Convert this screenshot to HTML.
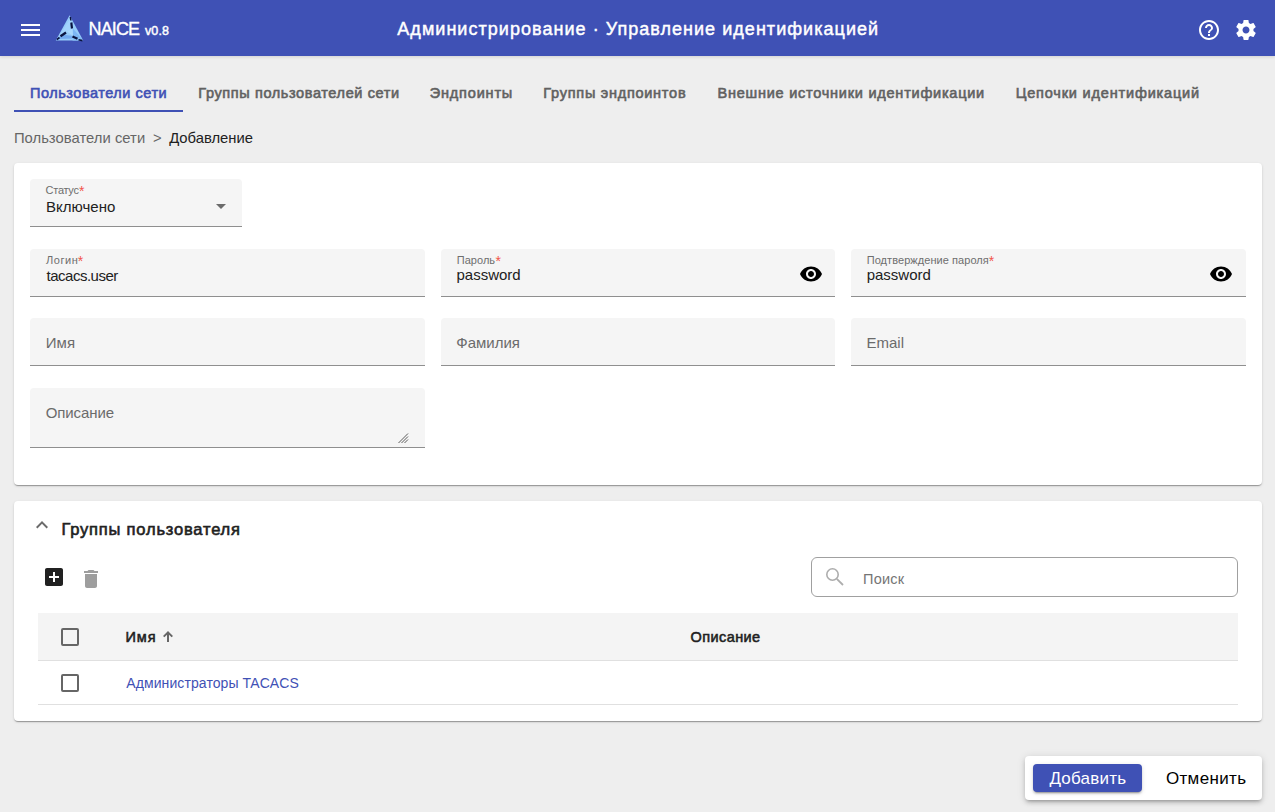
<!DOCTYPE html>
<html><head><meta charset="utf-8">
<style>
html,body{margin:0;padding:0}
body{width:1275px;height:812px;overflow:hidden;position:relative;background:#EEEEEE;font-family:"Liberation Sans",sans-serif}
.t{position:absolute;white-space:nowrap;line-height:1}
.abs{position:absolute}
.hdr{left:0;top:0;width:1275px;height:56px;background:#3F51B5;box-shadow:0 1px 3px rgba(0,0,0,.12)}
.card{background:#fff;border-radius:4px;box-shadow:0 2px 1px -1px rgba(0,0,0,.2),0 1px 1px 0 rgba(0,0,0,.14),0 1px 3px 0 rgba(0,0,0,.12)}
.fld{background:#F5F5F5;border-radius:4px 4px 0 0;border-bottom:1px solid #8F8F8F;box-sizing:border-box}
.ast{color:#F44336}
svg{position:absolute;overflow:visible}
</style></head><body>
<div class="abs hdr"></div>
<!-- hamburger -->
<div class="abs" style="left:21px;top:24px;width:19px;height:2px;background:#fff"></div>
<div class="abs" style="left:21px;top:29px;width:19px;height:2px;background:#fff"></div>
<div class="abs" style="left:21px;top:34px;width:19px;height:2px;background:#fff"></div>
<!-- logo -->
<svg style="left:0;top:0" width="1" height="1" viewBox="0 0 1 1">
  <polygon points="69.6,15.3 55.8,40.6 83.2,40.6" fill="#96CCFA"/>
  <polygon points="70.5,18 72.5,28 67,31.5 58,38" fill="#A2D3FC"/>
  <polygon points="72.5,28 83.2,40.6 73,36" fill="#7DB6F4"/>
  <polygon points="62,34.5 73,36 72.5,38.5 58,39" fill="#72AAF0"/>
  <polygon points="73,36 83.2,40.6 72.5,40.6" fill="#88C0F6"/>
  <polygon points="67,31.5 72.5,28 73,36" fill="#A9D8FE"/>
  <path d="M70.3,16.8 L70.9,20.5" stroke="#0A1440" stroke-width="1.5" fill="none"/>
  <path d="M71.3,22.5 L72,28.5" stroke="#0A1440" stroke-width="2.2" fill="none"/>
  <path d="M56.8,39.6 L59.5,37.5" stroke="#0A1440" stroke-width="1.6" fill="none"/>
  <path d="M60.5,36.3 L66,32.5" stroke="#0A1440" stroke-width="2.3" fill="none"/>
  <path d="M72.5,36.5 L77.5,38.8" stroke="#0A1440" stroke-width="2.3" fill="none"/>
  <path d="M78.5,39.8 L82.5,40.6" stroke="#0A1440" stroke-width="1.6" fill="none"/>
</svg>
<!-- help & settings -->
<svg style="left:1197px;top:18px" width="24" height="24" viewBox="0 0 24 24"><path fill="#fff" d="M11 18h2v-2h-2v2zm1-16C6.48 2 2 6.48 2 12s4.48 10 10 10 10-4.48 10-10S17.520 2 12 2zm0 18c-4.41 0-8-3.590-8-8s3.59-8 8-8 8 3.59 8 8-3.59 8-8 8zm0-14c-2.21 0-4 1.79-4 4h2c0-1.1.9-2 2-2s2 .9 2 2c0 2-3 1.75-3 5h2c0-2.25 3-2.5 3-5 0-2.21-1.79-4-4-4z"/></svg>
<svg style="left:1233.8px;top:17.8px" width="24" height="24" viewBox="0 0 24 24"><path fill="#fff" d="M19.43 12.98c.04-.32.07-.64.07-.98s-.03-.66-.07-.98l2.11-1.65c.19-.15.24-.42.12-.64l-2-3.46c-.12-.22-.39-.3-.61-.22l-2.49 1c-.52-.4-1.08-.73-1.690-.98l-.38-2.65C14.46 2.18 14.25 2 14 2h-4c-.25 0-.46.18-.49.42l-.38 2.65c-.61.25-1.17.59-1.69.98l-2.49-1c-.23-.09-.49 0-.61.22l-2 3.46c-.13.22-.07.49.12.64l2.11 1.65c-.04.32-.07.65-.07.98s.03.66.07.98l-2.11 1.65c-.19.15-.24.42-.12.64l2 3.46c.12.22.39.3.61.22l2.49-1c.52.4 1.08.73 1.69.98l.38 2.65c.03.24.24.42.49.42h4c.25 0 .46-.18.49-.42l.38-2.65c.61-.25 1.17-.59 1.69-.98l2.49 1c.23.09.49 0 .61-.22l2-3.46c.12-.22.07-.49-.12-.64l-2.11-1.650zM12 15.5c-1.93 0-3.5-1.57-3.5-3.5s1.57-3.5 3.5-3.5 3.5 1.57 3.5 3.5-1.57 3.5-3.5 3.5z"/></svg>
<!-- tab indicator -->
<div class="abs" style="left:14px;top:110px;width:169px;height:2px;background:#3F51B5"></div>

<!-- card 1 -->
<div class="abs card" style="left:14px;top:163px;width:1248px;height:322px"></div>
<div class="abs fld" style="left:30px;top:179px;width:212px;height:48px"></div>
<svg style="left:0;top:0" width="1" height="1"><polygon points="216,204 226,204 221,209" fill="#6B6B6B"/></svg>
<div class="abs fld" style="left:30px;top:249px;width:394.67px;height:48px"></div>
<div class="abs fld" style="left:440.67px;top:249px;width:394.67px;height:48px"></div>
<div class="abs fld" style="left:851.33px;top:249px;width:394.67px;height:48px"></div>
<svg style="left:799px;top:262px" width="24" height="24" viewBox="0 0 24 24"><path fill="#000" d="M12 4.5C7 4.5 2.73 7.61 1 12c1.73 4.39 6 7.5 11 7.5s9.27-3.11 11-7.5c-1.73-4.39-6-7.5-11-7.5zM12 17c-2.76 0-5-2.24-5-5s2.24-5 5-5 5 2.24 5 5-2.24 5-5 5zm0-8c-1.66 0-3 1.34-3 3s1.34 3 3 3 3-1.34 3-3-1.34-3-3-3z"/></svg>
<svg style="left:1209px;top:262px" width="24" height="24" viewBox="0 0 24 24"><path fill="#000" d="M12 4.5C7 4.5 2.73 7.61 1 12c1.73 4.39 6 7.5 11 7.5s9.27-3.11 11-7.5c-1.73-4.39-6-7.5-11-7.5zM12 17c-2.76 0-5-2.24-5-5s2.24-5 5-5 5 2.240 5 5-2.24 5-5 5zm0-8c-1.66 0-3 1.34-3 3s1.34 3 3 3 3-1.34 3-3-1.34-3-3-3z"/></svg>
<div class="abs fld" style="left:30px;top:318px;width:394.67px;height:48px"></div>
<div class="abs fld" style="left:440.67px;top:318px;width:394.67px;height:48px"></div>
<div class="abs fld" style="left:851.33px;top:318px;width:394.67px;height:48px"></div>
<div class="abs fld" style="left:30px;top:388px;width:394.67px;height:60px"></div>
<svg style="left:0;top:0" width="1" height="1"><g stroke="#5A5A5A" stroke-width="1"><line x1="398.5" y1="443" x2="408" y2="433.5"/><line x1="401.5" y1="443" x2="408" y2="436.5"/><line x1="404.5" y1="443" x2="408" y2="439.5"/></g></svg>

<!-- card 2 -->
<div class="abs card" style="left:14px;top:501px;width:1248px;height:220px"></div>
<svg style="left:30px;top:513.2px" width="24" height="24" viewBox="0 0 24 24"><path fill="#6B6B6B" d="M12 8l-6 6 1.41 1.41L12 10.83l4.59 4.58L18 14z"/></svg>
<svg style="left:42px;top:565px" width="24" height="24" viewBox="0 0 24 24"><path fill="#212121" d="M19 3H5c-1.11 0-2 .9-2 2v14c0 1.1.89 2 2 2h14c1.1 0 2-.9 2-2V5c0-1.1-.9-2-2-2zm-2 10h-4v4h-2v-4H7v-2h4V7h2v4h4v2z"/></svg>
<svg style="left:79.3px;top:567px" width="24" height="24" viewBox="0 0 24 24"><path fill="#9E9E9E" d="M6 19c0 1.1.9 2 2 2h8c1.1 0 2-.9 2-2V7H6v12zM19 4h-3.5l-1-1h-5l-1 1H5v2h14V4z"/></svg>
<div class="abs" style="left:811px;top:557px;width:427px;height:40px;border:1px solid #A0A0A0;border-radius:6px;box-sizing:border-box"></div>
<svg style="left:823.2px;top:564.9px" width="24" height="24" viewBox="0 0 24 24"><circle cx="9.5" cy="9.5" r="5.7" fill="none" stroke="#ADADAD" stroke-width="1.6"/><line x1="13.8" y1="13.8" x2="20" y2="20" stroke="#ADADAD" stroke-width="1.8"/></svg>
<div class="abs" style="left:38px;top:613px;width:1200px;height:47px;background:#F4F4F4"></div>
<div class="abs" style="left:38px;top:660px;width:1200px;height:1px;background:#E0E0E0"></div>
<div class="abs" style="left:38px;top:704px;width:1200px;height:1px;background:#E0E0E0"></div>
<div class="abs" style="left:61px;top:628px;width:18px;height:18px;border:2px solid #666;border-radius:2px;box-sizing:border-box"></div>
<div class="abs" style="left:61px;top:674px;width:18px;height:18px;border:2px solid #666;border-radius:2px;box-sizing:border-box"></div>
<svg style="left:0;top:0" width="1" height="1"><path fill="#666" d="M168,630.9 L173,635.9 L171.6,637.3 L169,634.7 L169,642 L167,642 L167,634.7 L164.4,637.3 L163,635.9 Z"/></svg>

<!-- footer -->
<div class="abs card" style="left:1025px;top:756px;width:237px;height:44px;box-shadow:0 3px 3px -2px rgba(0,0,0,.2),0 3px 4px 0 rgba(0,0,0,.14),0 1px 8px 0 rgba(0,0,0,.12)"></div>
<div class="abs" style="left:1033px;top:764px;width:109px;height:28px;background:#3F51B5;border-radius:4px;box-shadow:0 3px 1px -2px rgba(0,0,0,.2),0 2px 2px 0 rgba(0,0,0,.14),0 1px 5px 0 rgba(0,0,0,.12)"></div>

<div class="t" style="left:88.60px;top:20.00px;font-size:18px;font-weight:normal;color:#fff;letter-spacing:-0.900px;-webkit-text-stroke:0.35px #fff;">NAICE</div>
<div class="t" style="left:145.00px;top:25.00px;font-size:12.5px;font-weight:normal;color:#fff;letter-spacing:0.100px;-webkit-text-stroke:0.45px #fff;">v0.8</div>
<div class="t" style="left:397.30px;top:20.00px;font-size:18px;font-weight:normal;color:#fff;letter-spacing:1.039px;-webkit-text-stroke:0.45px #fff;">Администрирование · Управление идентификацией</div>
<div class="t" style="left:30.00px;top:86.00px;font-size:14.5px;font-weight:normal;color:#3F51B5;letter-spacing:0.525px;-webkit-text-stroke:0.6px #3F51B5;">Пользователи сети</div>
<div class="t" style="left:198.30px;top:86.00px;font-size:14.5px;font-weight:normal;color:#616161;letter-spacing:0.612px;-webkit-text-stroke:0.6px #616161;">Группы пользователей сети</div>
<div class="t" style="left:429.80px;top:86.00px;font-size:14.5px;font-weight:normal;color:#616161;letter-spacing:0.812px;-webkit-text-stroke:0.6px #616161;">Эндпоинты</div>
<div class="t" style="left:543.30px;top:86.00px;font-size:14.5px;font-weight:normal;color:#616161;letter-spacing:0.738px;-webkit-text-stroke:0.6px #616161;">Группы эндпоинтов</div>
<div class="t" style="left:717.50px;top:86.00px;font-size:14.5px;font-weight:normal;color:#616161;letter-spacing:0.760px;-webkit-text-stroke:0.6px #616161;">Внешние источники идентификации</div>
<div class="t" style="left:1015.70px;top:86.00px;font-size:14.5px;font-weight:normal;color:#616161;letter-spacing:0.815px;-webkit-text-stroke:0.6px #616161;">Цепочки идентификаций</div>
<div class="t" style="left:13.90px;top:131.00px;font-size:14.8px;font-weight:normal;color:#666666;letter-spacing:0.025px;">Пользователи сети</div>
<div class="t" style="left:153.00px;top:131.00px;font-size:14.8px;font-weight:normal;color:#666666;letter-spacing:0.000px;">&gt;</div>
<div class="t" style="left:169.20px;top:131.00px;font-size:14.8px;font-weight:normal;color:#212121;letter-spacing:0.000px;">Добавление</div>
<div class="t" style="left:45.60px;top:185.00px;font-size:11px;font-weight:normal;color:#6E6E6E;letter-spacing:-0.280px;">Статус</div>
<div class="t" style="left:46.10px;top:255.00px;font-size:11px;font-weight:normal;color:#6E6E6E;letter-spacing:0.525px;">Логин</div>
<div class="t" style="left:456.80px;top:255.00px;font-size:11px;font-weight:normal;color:#6E6E6E;letter-spacing:0.020px;">Пароль</div>
<div class="t" style="left:866.70px;top:255.00px;font-size:11px;font-weight:normal;color:#6E6E6E;letter-spacing:0.063px;">Подтверждение пароля</div>
<div class="t" style="left:78.90px;top:184.00px;font-size:14px;font-weight:normal;color:#F2544A;letter-spacing:0.000px;">*</div>
<div class="t" style="left:77.70px;top:254.00px;font-size:14px;font-weight:normal;color:#F2544A;letter-spacing:0.000px;">*</div>
<div class="t" style="left:495.60px;top:254.00px;font-size:14px;font-weight:normal;color:#F2544A;letter-spacing:0.000px;">*</div>
<div class="t" style="left:988.80px;top:254.00px;font-size:14px;font-weight:normal;color:#F2544A;letter-spacing:0.000px;">*</div>
<div class="t" style="left:46.00px;top:198.70px;font-size:15px;font-weight:normal;color:#212121;letter-spacing:0.029px;">Включено</div>
<div class="t" style="left:46.50px;top:267.50px;font-size:15px;font-weight:normal;color:#212121;letter-spacing:-0.490px;">tacacs.user</div>
<div class="t" style="left:456.50px;top:267.20px;font-size:15px;font-weight:normal;color:#212121;letter-spacing:0.000px;">password</div>
<div class="t" style="left:866.70px;top:267.20px;font-size:15px;font-weight:normal;color:#212121;letter-spacing:0.000px;">password</div>
<div class="t" style="left:45.80px;top:335.00px;font-size:15px;font-weight:normal;color:#6B6B6B;letter-spacing:0.000px;">Имя</div>
<div class="t" style="left:456.30px;top:335.00px;font-size:15px;font-weight:normal;color:#6B6B6B;letter-spacing:0.000px;">Фамилия</div>
<div class="t" style="left:866.50px;top:335.00px;font-size:15px;font-weight:normal;color:#6B6B6B;letter-spacing:0.000px;">Email</div>
<div class="t" style="left:45.70px;top:404.90px;font-size:15px;font-weight:normal;color:#6B6B6B;letter-spacing:-0.086px;">Описание</div>
<div class="t" style="left:61.40px;top:521.00px;font-size:16.5px;font-weight:normal;color:#212121;letter-spacing:0.806px;-webkit-text-stroke:0.6px #212121;">Группы пользователя</div>
<div class="t" style="left:863.00px;top:571.70px;font-size:14.5px;font-weight:normal;color:#757575;letter-spacing:0.250px;">Поиск</div>
<div class="t" style="left:125.50px;top:630.00px;font-size:14.5px;font-weight:normal;color:#212121;letter-spacing:0.900px;-webkit-text-stroke:0.55px #212121;">Имя</div>
<div class="t" style="left:690.60px;top:630.00px;font-size:14.5px;font-weight:normal;color:#212121;letter-spacing:0.400px;-webkit-text-stroke:0.55px #212121;">Описание</div>
<div class="t" style="left:126.30px;top:675.90px;font-size:14px;font-weight:normal;color:#3F51B5;letter-spacing:0.090px;">Администраторы TACACS</div>
<div class="t" style="left:1049.40px;top:770.00px;font-size:17px;font-weight:normal;color:#fff;letter-spacing:0.229px;">Добавить</div>
<div class="t" style="left:1165.90px;top:770.00px;font-size:17px;font-weight:normal;color:#000;letter-spacing:0.357px;">Отменить</div>
<div class="t" style="left:0;top:0"></div>
</body></html>
